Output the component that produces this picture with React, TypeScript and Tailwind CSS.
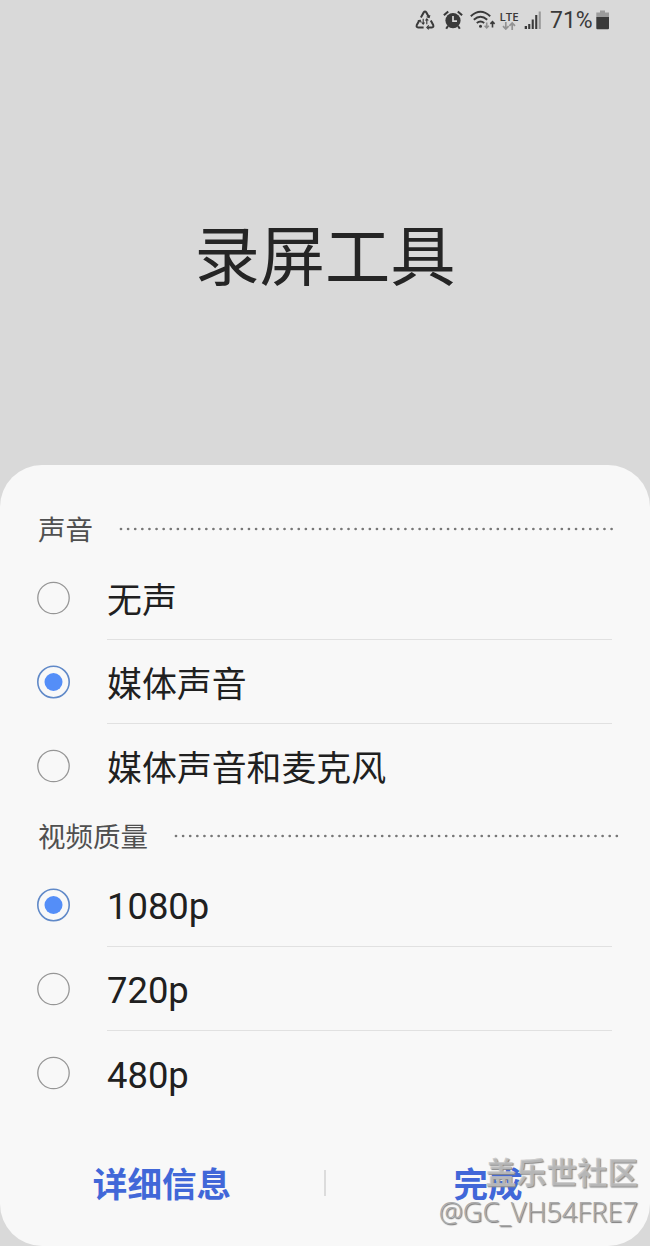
import { useState } from 'react'

interface SectionProps {
  title: string
  options: string[]
  initial: string
  lineWidth: number
}

function StatusIcons() {
  return (
    <div className="flex h-10 items-center pl-[415px] text-[#3a3a3a]">
      <svg width="20" height="20" viewBox="0 0 20 20" fill="none" stroke="currentColor" strokeWidth="2">
        <path d="M5.9 7.4 8.7 2.4Q10 .5 11.3 2.4L14 7.2M15.8 10.6 18.2 15Q19 17.3 16.8 17.5H12.6M8.6 17.5H3.2Q1 17.3 1.8 15L4.3 10.6" />
        <path d="m2.8 11 2.4-.8 1 2.3M11.6 6.8l2.6.8.7-2.5M13.8 15.3l-2 2.2 2 1.9" strokeWidth="1.1" />
        <path d="M8.2 8.8v5.4m-1.5-1.7 1.5 1.7 1.3-1.7M11.8 14.2V8.8m-1.3 1.7 1.3-1.7 1.5 1.7" strokeWidth="1.1" />
      </svg>
      <svg className="ml-[8px]" width="20" height="20" viewBox="0 0 20 20" fill="none">
        <circle cx="10" cy="10.6" r="7.6" fill="currentColor" />
        <path d="M.9 5.3 5.2 1.5M14.8 1.5l4.3 3.8M5 16l-1.8 2.8M15 16l1.8 2.8" stroke="currentColor" strokeWidth="2.1" />
        <path d="M10 6v5.2h4" stroke="#d9d9d9" strokeWidth="1.7" />
      </svg>
      <svg className="ml-[7px]" width="26" height="20" viewBox="0 0 26 20" fill="none" stroke="currentColor" strokeWidth="1.9">
        <path d="M.8 6.2Q10.5-2.8 20.2 6.2M3.8 9.7q6.7-6 13.4 0M6.8 13q3.7-3.2 7.4 0" />
        <circle cx="10.5" cy="16.2" r="1.5" fill="currentColor" stroke="none" />
        <path d="M16.7 12.5v5.5m-2.1-2.3 2.1 2.2 2.1-2.2" stroke="#909090" strokeWidth="1.6" />
        <path d="M22.5 17.5v-6m-2.1 2.4 2.1-2.2 2.1 2.2" strokeWidth="1.6" />
      </svg>
      <div className="ml-[3px] flex w-[20px] flex-col items-center">
        <span className="font-['Open_Sans',sans-serif] text-[11.5px] leading-[11px] font-semibold">LTE</span>
        <svg width="14" height="8" viewBox="0 0 14 8" fill="none" stroke="#929292" strokeWidth="1.7">
          <path d="M3.8 0v7M1 4.1 3.8 7l2.8-2.9M10.2 8V1M7.4 3.9 10.2 1 13 3.9" />
        </svg>
      </div>
      <svg className="ml-[5px]" width="18" height="20" viewBox="0 0 18 20" fill="currentColor">
        <path d="M.7 16H3v3H.7zM4.2 14h2.1v5H4.2zM7.7 9.5h2.1V19H7.7zM11.2 5h2.1v14h-2.1z" />
        <path d="M14.7 1.5h2.1V19h-2.1z" fill="#999" />
      </svg>
      <span className="ml-[8px] w-[46px] pt-[3px] font-[Roboto,sans-serif] text-[23px] whitespace-nowrap">71%</span>
      <svg width="14" height="20" viewBox="0 0 14 20">
        <path d="M4 .5h5v2h4V7H.3V2.5H4z" fill="#9c9c9c" />
        <path d="M.3 7H13v11.2q0 1-1 1H1.3q-1 0-1-1z" fill="#3a3a3a" />
      </svg>
    </div>
  )
}

function Radio({ checked }: { checked: boolean }) {
  return (
    <svg className="shrink-0" width="34" height="34" viewBox="0 0 34 34" fill="none">
      <circle cx="16.5" cy="17" r="15.7" stroke={checked ? '#6089c8' : '#969696'} strokeWidth={checked ? 1.6 : 1.3} />
      {checked && <circle cx="16.5" cy="17" r="9" fill="#548ef8" />}
    </svg>
  )
}

function Section({ title, options, initial, lineWidth }: SectionProps) {
  const [selected, setSelected] = useState(initial)

  return (
    <section>
      <div className="flex h-[55px] items-center pl-[38px]">
        <h2 className="pt-[5px] text-[27.5px] leading-[40px] whitespace-nowrap text-[#505050]">{title}</h2>
        <svg className="ml-[26px]" width={lineWidth} height="4">
          <line x1="2" y1="2" x2={lineWidth - 1} y2="2" stroke="#777" strokeWidth="2.7" strokeLinecap="round" strokeDasharray="0 7.11" />
        </svg>
      </div>
      {options.map((option, i) => (
        <button
          key={option}
          role="radio"
          aria-checked={selected === option}
          onClick={() => setSelected(option)}
          className="flex h-[84px] w-full items-center pl-[37px] text-left"
        >
          <Radio checked={selected === option} />
          <span
            className={`ml-[36px] flex h-full w-[505px] items-center text-[#202020] ${
              /^\d/.test(option) ? 'pt-[6px] text-[36.4px]' : 'pt-[9px] text-[34.9px]'
            } ${i < options.length - 1 ? 'border-b border-[#e1e1e1]' : ''}`}
          >
            {option}
          </span>
        </button>
      ))}
    </section>
  )
}

export default function App() {
  return (
    <div className="relative flex h-[1246px] w-[650px] flex-col overflow-hidden bg-[#d9d9d9] font-[Roboto,'Noto_Sans_CJK_SC',sans-serif]">
      <StatusIcons />
      <header className="flex h-[425px] justify-center pt-[170px]">
        <h1 className="text-[65.3px] leading-[96px] text-[#252525]">录屏工具</h1>
      </header>
      <main className="flex h-[781px] flex-col rounded-[42px] bg-[#f8f8f8] pt-[36px]">
        <Section title="声音" options={['无声', '媒体声音', '媒体声音和麦克风']} initial="媒体声音" lineWidth={496} />
        <Section title="视频质量" options={['1080p', '720p', '480p']} initial="1080p" lineWidth={445} />
        <footer className="flex h-[136px] items-center pt-[4px] text-[34.6px] font-bold text-[#4167d8]">
          <button className="flex-1 pt-[6px]">详细信息</button>
          <span className="h-[26px] w-[2px] bg-[#dcdcdc]" />
          <button className="flex-1 pt-[6px]">完成</button>
        </footer>
      </main>
      <div className="absolute right-[12px] bottom-[15px] flex flex-col items-end whitespace-nowrap">
        <span className="text-[30.5px] leading-[39px] font-bold text-[#c4c4c4]/80 [text-shadow:1px_1px_1px_#888]">盖乐世社区</span>
        <span className="font-['Noto_Sans',sans-serif] text-[27.2px] leading-[38px] font-light text-[#aaa] [text-shadow:1px_1px_1px_#777]">@GC_VH54FRE7</span>
      </div>
    </div>
  )
}
